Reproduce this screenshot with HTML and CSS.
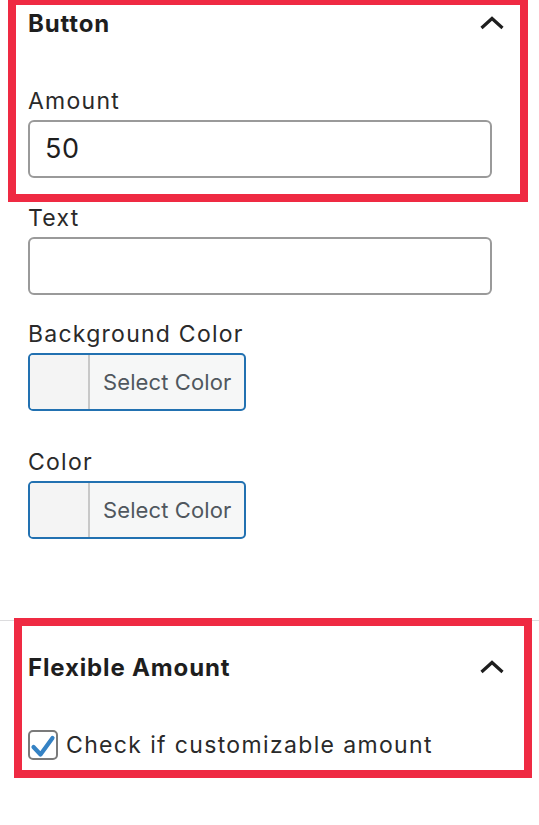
FILE: index.html
```html
<!DOCTYPE html>
<html lang="en">
<head>
<meta charset="utf-8">
<title>Button settings</title>
<link rel="stylesheet" href="styles.css">
</head>
<body>
<div class="sidebar">
  <section class="panel panel-button">
    <div class="highlight highlight-top">
      <div class="panel-header">
        <h2 class="panel-title">Button</h2>
        <svg class="chevron" width="26" height="14" viewBox="0 0 26 14" aria-hidden="true"><polyline points="2.5,12 13,2.5 23.5,12" fill="none" stroke="#1e1e1e" stroke-width="3.2"/></svg>
      </div>
      <div class="field">
        <label class="field-label">Amount</label>
        <div class="text-input">50</div>
      </div>
    </div>
    <div class="panel-rest">
      <div class="field">
        <label class="field-label">Text</label>
        <div class="text-input"></div>
      </div>
      <div class="field field-spaced">
        <label class="field-label">Background Color</label>
        <div class="color-button"><span class="swatch"></span><span class="color-text">Select Color</span></div>
      </div>
      <div class="field field-color">
        <label class="field-label">Color</label>
        <div class="color-button"><span class="swatch"></span><span class="color-text">Select Color</span></div>
      </div>
    </div>
  </section>
  <section class="panel panel-flex">
    <div class="highlight highlight-bottom">
      <div class="panel-header">
        <h2 class="panel-title">Flexible Amount</h2>
        <svg class="chevron" width="26" height="14" viewBox="0 0 26 14" aria-hidden="true"><polyline points="2.5,12 13,2.5 23.5,12" fill="none" stroke="#1e1e1e" stroke-width="3.2"/></svg>
      </div>
      <div class="check-row">
        <span class="checkbox"><svg width="26" height="26" viewBox="0 0 26 26" aria-hidden="true"><polyline points="3.5,15 10.5,22.5 22.5,6" fill="none" stroke="#3582c4" stroke-width="4.2" stroke-linecap="round" stroke-linejoin="round"/></svg></span>
        <span class="check-label">Check if customizable amount</span>
      </div>
    </div>
  </section>
</div>
</body>
</html>
```
FILE: styles.css
```css
* { box-sizing: border-box; }
html, body { margin: 0; padding: 0; background: #ffffff; }
body {
  font-family: Inter, "Noto Sans", "Liberation Sans", sans-serif;
  color: #1e1e1e;
  width: 539px;
  overflow: hidden;
}
.sidebar { display: flex; flex-direction: column; }

.highlight { border: 8px solid #ef2a43; }
.highlight-top {
  margin: -3px 0 0 8px;
  width: 520px;
  padding: 4px 15px 16px 12px;
}
.highlight-bottom {
  margin: -3px 0 0 14px;
  width: 518px;
  padding: 27px 19px 10px 6px;
}

.panel-header {
  display: flex;
  align-items: center;
  justify-content: space-between;
  height: 30px;
}
.panel-title {
  margin: 0;
  font-size: 24px;
  line-height: 30px;
  font-weight: 700;
  letter-spacing: 0.85px;
  color: #1e1e1e;
}
.chevron { display: block; margin-top: -2px; }

.highlight-top .panel-header { margin-bottom: 48px; }

.field { display: flex; flex-direction: column; gap: 5px; width: 464px; }
.field-label {
  font-size: 23px;
  line-height: 28px;
  letter-spacing: 1.25px;
  color: #2a2a2a;
}
.text-input {
  height: 58px;
  border: 2px solid #9a9a9a;
  border-radius: 6px;
  padding: 0 15px;
  font-size: 27px;
  line-height: 54px;
  letter-spacing: 0.5px;
  color: #1e1e1e;
}

.panel-rest { padding: 2px 0 81px 28px; }
.field-spaced { margin-top: 25px; }
.field-color { margin-top: 37px; }

.color-button {
  display: flex;
  width: 218px;
  height: 58px;
  border: 2px solid #2271b1;
  border-radius: 5px;
  background: #f6f7f7;
  overflow: hidden;
}
.swatch {
  width: 60px;
  border-right: 2px solid #c8c8c8;
  background: #f4f4f4;
}
.color-text {
  flex: 1;
  padding-left: 13px;
  font-size: 22px;
  line-height: 54px;
  letter-spacing: 0.1px;
  color: #50575e;
}

.panel-flex { border-top: 1px solid #dcdcde; }
.check-row {
  display: flex;
  align-items: center;
  gap: 8px;
  margin-top: 47px;
}
.checkbox {
  width: 30px;
  height: 30px;
  border: 2px solid #7a7a7a;
  border-radius: 5px;
  display: flex;
  align-items: center;
  justify-content: center;
  background: #fff;
}
.checkbox svg { display: block; }
.check-label {
  font-size: 23px;
  line-height: 28px;
  letter-spacing: 1.35px;
  color: #2a2a2a;
}
```
